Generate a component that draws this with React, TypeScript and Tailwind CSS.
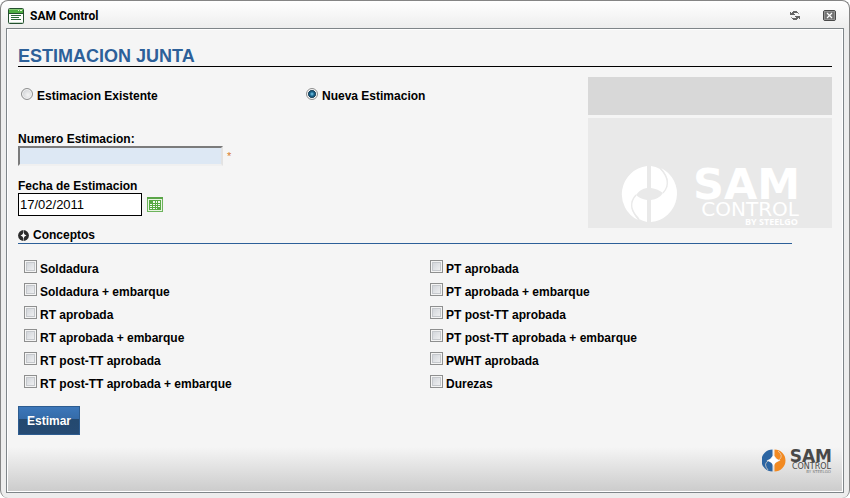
import { useState } from "react";

const leftConcepts = [
  "Soldadura",
  "Soldadura + embarque",
  "RT aprobada",
  "RT aprobada + embarque",
  "RT post-TT aprobada",
  "RT post-TT aprobada + embarque",
];

const rightConcepts = [
  "PT aprobada",
  "PT aprobada + embarque",
  "PT post-TT aprobada",
  "PT post-TT aprobada + embarque",
  "PWHT aprobada",
  "Durezas",
];

function WindowIcon() {
  return (
    <svg width="16" height="16" viewBox="0 0 16 16" aria-hidden="true">
      <rect x="0.5" y="0.5" width="15" height="15" rx="1" fill="#fff" stroke="#24502f" />
      <rect x="1" y="1" width="14" height="4" fill="#4fae43" />
      <path d="M1 1.5h14" stroke="#86cc74" />
      <path d="M10 2.5h1M12 2.5h2" stroke="#e4f6de" />
      <path d="M0 5.5h16" stroke="#24502f" />
      <path d="M3 7.5h10M3 9.5h8M3 11.5h10" stroke="#2e6b3a" />
      <path d="M1 14.5h14" stroke="#c6dcc9" />
    </svg>
  );
}

function RefreshIcon() {
  return (
    <svg width="10" height="9" viewBox="0 0 10 9" aria-hidden="true">
      <path d="M0 1h1v1h1V1h1V0h4v1h1v1H4v1h1v1H0z" fill="#666" />
      <path d="M10 8H9V7H8v1H7v1H3V8H2V7h4V6H5V5h5z" fill="#666" />
      <path d="M8 2h1v1H8zM1 6h1v1H1z" fill="#999" />
    </svg>
  );
}

function CloseIcon() {
  return (
    <svg width="13" height="11" viewBox="0 0 13 11" aria-hidden="true">
      <rect x="0.5" y="0.5" width="12" height="10" rx="1.5" fill="#747474" stroke="#4a4a4a" />
      <rect x="1.5" y="1.5" width="10" height="8" fill="none" stroke="#929292" />
      <path d="M4 3l5 5M9 3l-5 5" stroke="#fff" strokeWidth="1.2" />
    </svg>
  );
}

function CalendarIcon() {
  return (
    <svg width="16" height="15" viewBox="0 0 16 15" aria-hidden="true">
      <rect x="0.5" y="0.5" width="15" height="14" fill="#e8f5e2" stroke="#6db35c" />
      <rect x="0" y="0" width="16" height="2" fill="#5aa548" />
      <rect x="2" y="3" width="12" height="10" fill="#58a844" />
      <path
        d="M6 4h2v2H6zM9 4h1v2H9zM11 4h2v2h-2zM3 7h2v1H3zM6 7h2v1H6zM9 7h1v1H9zM11 7h2v1h-2zM3 9h2v1H3zM6 9h2v1H6zM9 9h1v1H9zM11 9h2v1h-2zM3 11h2v1H3zM6 11h2v1H6zM9 11h1v1H9z"
        fill="#f4fbf1"
      />
    </svg>
  );
}

function SectionIcon() {
  return (
    <svg width="11" height="11" viewBox="0 0 11 11" aria-hidden="true">
      <circle cx="5.5" cy="5.5" r="5.4" fill="#2c2c2c" />
      <path d="M5.5 0v11" stroke="#999" strokeWidth="1" />
      <path d="M5.5 2.5L6.6 4.4L8.5 5.5L6.6 6.6L5.5 8.5L4.4 6.6L2.5 5.5L4.4 4.4z" fill="#fff" />
    </svg>
  );
}

function WatermarkLogo() {
  return (
    <svg width="180" height="72" viewBox="0 -6 180 72" role="img" aria-label="SAM Control by Steelgo">
      <path d="M26 4A28.5 28.5 0 0 0 17 58Q4 42 15 33Q19 27 26 26z" fill="#fff" />
      <path d="M26 60A28 28 0 0 1 18 57Q4 42 15 33Q19 37 26 38z" fill="#fff" />
      <path d="M30 4A28 28 0 0 1 39 7Q53 21 42 31Q37 27 30 26z" fill="#fff" />
      <path d="M30 60A28.5 28.5 0 0 0 40 6Q53 21 42 31Q38 37 30 38z" fill="#fff" />
      <path d="M18 57Q5 44 15 33M39 6Q52 20 42 31" fill="none" stroke="#e9e9e9" strokeWidth="1.3" />
      <g fill="#fff" fontFamily="DejaVu Sans, sans-serif" textAnchor="end">
        <text x="179" y="37" fontSize="43" fontWeight="700">SAM</text>
        <text x="178" y="54" fontSize="20" fontWeight="400">CONTROL</text>
        <text x="177" y="63" fontSize="9" fontWeight="700" fontFamily="Open Sans, sans-serif">BY STEELGO</text>
      </g>
    </svg>
  );
}

function FooterLogo() {
  return (
    <svg width="70" height="28" viewBox="0 0 70 28" role="img" aria-label="SAM Control by Steelgo">
      <path d="M10.5 2.5A11 11 0 0 0 10.5 24.5V17L8 15L4.5 13.5L8 12L10.5 9z" fill="#2c65a2" />
      <path d="M12.5 2.5A11 11 0 0 1 12.5 24.5V17L15 15L18.5 13.5L15 12L12.5 9z" fill="#f28a22" />
      <path d="M6 23Q1 17 6 14M16 4Q22 9 17 13" fill="none" stroke="#e9dccb" strokeWidth="0.7" />
      <path d="M11.5 8L13.5 11.5L17 13.5L13.5 15.5L11.5 19L9.5 15.5L6 13.5L9.5 11.5z" fill="#fff" />
      <g fontFamily="DejaVu Sans, sans-serif" fill="#484848" textAnchor="end">
        <text x="70" y="15" fontSize="17" fontWeight="700">SAM</text>
        <text x="69" y="22" fontSize="8" fontWeight="400">CONTROL</text>
        <text x="69" y="26" fontSize="4" fontWeight="400" fill="#777">BY STEELGO</text>
      </g>
    </svg>
  );
}

function Concept({ label }: { label: string }) {
  return (
    <label className="flex h-[23px] items-start gap-[3px] leading-[18px]">
      <input
        type="checkbox"
        className="size-[13px] shrink-0 appearance-none border border-[#8e8f8f] bg-gradient-to-br from-[#cbcfd5] to-[#f6f6f6] shadow-[inset_0_0_0_1px_#f4f4f4,inset_0_0_0_2px_#c5c8cc] checked:bg-[#2c628b] checked:bg-none"
      />
      <span>{label}</span>
    </label>
  );
}

function Mode({ label, checked, onSelect }: { label: string; checked: boolean; onSelect: () => void }) {
  return (
    <label className="flex items-start gap-1 pl-[3px] leading-[16px]">
      <input
        type="radio"
        name="mode"
        checked={checked}
        onChange={onSelect}
        className="size-3 shrink-0 appearance-none rounded-full border border-[#8e8f8f] bg-[radial-gradient(circle_at_60%_60%,#f4f4f4,#c4c7cb)] shadow-[inset_0_0_0_1px_#f4f4f4] checked:bg-[radial-gradient(circle_at_center,#7fd0f0_0px,#1c6a94_2px,#12354c_4px,#f4f4f4_4px)]"
      />
      <span>{label}</span>
    </label>
  );
}

export default function App() {
  const [mode, setMode] = useState("nueva");

  return (
    <div className="flex min-h-screen flex-col rounded-lg border-x border-t border-[#858585] bg-[#ededed] bg-[linear-gradient(#ffffff,#ededed_28px)] px-[5px] pb-[5px] font-['Liberation_Sans',Arial,sans-serif] text-[12px] font-bold text-black">
      <header className="flex h-[27px] items-center px-0.5 pt-0.5">
        <WindowIcon />
        <h1 className="flex-1 pl-1.5 font-[Roboto,'Liberation_Sans',sans-serif] leading-[16px]">SAM Control</h1>
        <button type="button" aria-label="Recargar" className="mr-[23px]">
          <RefreshIcon />
        </button>
        <button type="button" aria-label="Cerrar" className="mr-1.5">
          <CloseIcon />
        </button>
      </header>

      <div className="flex flex-1 flex-col border border-[#7f8589] bg-white p-px">
        <main className="flex-1 bg-[#f5f5f5] px-2.5 pt-4">
          <h2 className="border-b border-black text-[18px] leading-[20px] text-[#2d6099]">ESTIMACION JUNTA</h2>

          <div className="mt-2.5 flex">
            <div className="flex-1">
              <div className="grid grid-cols-2 pt-[11px]">
                <Mode label="Estimacion Existente" checked={mode === "existente"} onSelect={() => setMode("existente")} />
                <Mode label="Nueva Estimacion" checked={mode === "nueva"} onSelect={() => setMode("nueva")} />
              </div>

              <div className="mt-7">
                <label htmlFor="numero" className="block leading-[14px]">Numero Estimacion:</label>
                <div className="flex items-center gap-1">
                  <input
                    id="numero"
                    type="text"
                    className="h-5 w-[205px] border-2 border-t-[#7b7b7b] border-r-[#e3e3e3] border-b-[#f0f0f0] border-l-[#7b7b7b] bg-[#dde8f4] px-0.5 font-normal"
                  />
                  <span className="text-[11px] font-normal text-[#d97b2b]">*</span>
                </div>
              </div>

              <div className="mt-[13px]">
                <label htmlFor="fecha" className="block leading-[14px]">Fecha de Estimacion</label>
                <div className="flex items-center gap-[5px]">
                  <input
                    id="fecha"
                    type="text"
                    defaultValue="17/02/2011"
                    className="h-[23px] w-[124px] border border-black bg-white px-px text-[13px] font-normal"
                  />
                  <button type="button" aria-label="Abrir calendario">
                    <CalendarIcon />
                  </button>
                </div>
              </div>
            </div>

            <aside className="flex w-[244px] flex-col gap-[3px]">
              <div className="h-[38px] bg-[#d8d8d8]" />
              <div className="flex h-[110px] items-end justify-end bg-[#e9e9e9] pr-[31px]">
                <WatermarkLogo />
              </div>
            </aside>
          </div>

          <h3 className="mr-10 flex items-center gap-1 border-b border-[#2d6099] leading-[15px]">
            <SectionIcon />
            Conceptos
          </h3>

          <div className="mt-4 grid grid-cols-2">
            <div className="pl-1.5">
              {leftConcepts.map((label) => (
                <Concept key={label} label={label} />
              ))}
            </div>
            <div className="pl-[5px]">
              {rightConcepts.map((label) => (
                <Concept key={label} label={label} />
              ))}
            </div>
          </div>

          <button
            type="button"
            className="mt-2 block h-[29px] border border-[#2d5c90] bg-[linear-gradient(#3c77ba,#356ba8_45%,#24496f_45%,#254a73)] px-2 text-white"
          >
            Estimar
          </button>
        </main>

        <footer className="flex h-11 items-start justify-end bg-[linear-gradient(#f5f5f5,#cccccc)] pr-2.5">
          <FooterLogo />
        </footer>
      </div>
    </div>
  );
}
